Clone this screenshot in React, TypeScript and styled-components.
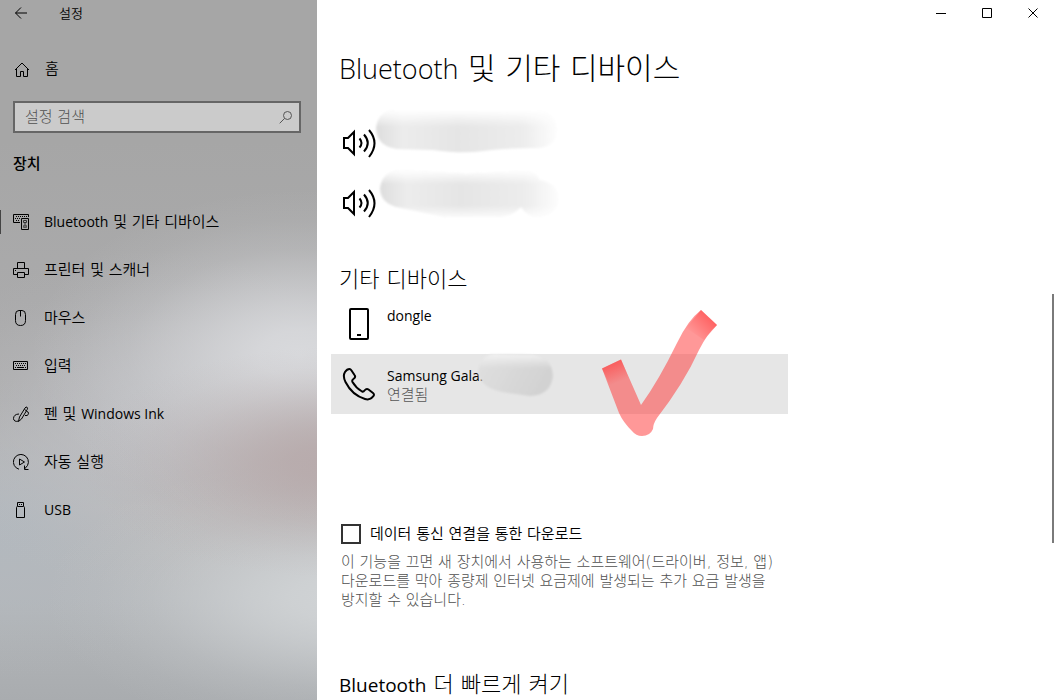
import React from "react";
import styled, { createGlobalStyle } from "styled-components";

const hangul = `"DejaVu Sans", "Noto Sans CJK KR", sans-serif`;
const latin = `"Open Sans", "Noto Sans CJK KR", sans-serif`;

// Soft elliptical light with a smooth falloff, for the blurred sidebar backdrop.
const glow = (size: string, at: string, rgb: string, strength = 1) => {
  const stops = [[1, 0], [0.93, 15], [0.75, 30], [0.5, 47], [0.25, 64], [0.08, 82], [0, 100]];
  return `radial-gradient(ellipse ${size} at ${at}, ${stops
    .map(([a, p]) => `rgba(${rgb}, ${(a * strength).toFixed(2)}) ${p}%`)
    .join(", ")})`;
};

const GlobalStyle = createGlobalStyle`
  * { box-sizing: border-box; }
  body {
    margin: 0;
    background: #fff;
    color: #000;
    font: 15px/19px ${hangul};
    overflow: hidden;
  }
  h1, h2, p, ul { margin: 0; padding: 0; }
  ul { list-style: none; }
  button { border: 0; padding: 0; background: none; font: inherit; color: inherit; }
`;

const Window = styled.div`
  display: grid;
  grid-template-columns: 317px 1fr;
  height: 100vh;
  overflow: hidden;
  font-weight: 300;
`;

const Sidebar = styled.aside`
  display: flex;
  flex-direction: column;
  background:
    ${glow("250px 115px", "330px 462px", "183, 169, 170", 0.9)},
    ${glow("270px 165px", "300px 355px", "217, 218, 221", 0.98)},
    ${glow("290px 140px", "335px 598px", "209, 212, 214", 0.95)},
    ${glow("240px 170px", "150px 420px", "192, 193, 197", 0.8)},
    ${glow("220px 150px", "0 530px", "178, 184, 190", 0.9)},
    linear-gradient(#a6a6a6 0, #a6a6a6 140px, #aaaaab 300px, #aeaeaf 400px, #bbbaba 510px, #b4b7ba 600px, #a9acaf 700px);
`;

const TitleBar = styled.header`
  display: flex;
  align-items: center;
  height: 26px;
  padding-left: 14px;
  gap: 31px;
  font-size: 13px;
  font-weight: 350;
`;

const IconButton = styled.button`
  display: flex;
`;

const HomeLink = styled.a`
  display: flex;
  align-items: center;
  gap: 14px;
  height: 32px;
  margin-top: 27px;
  padding-left: 14px;
  font-weight: 350;
  color: inherit;
  text-decoration: none;
`;

const SearchBox = styled.label`
  display: flex;
  align-items: center;
  height: 32px;
  margin: 16px 16px 0 13px;
  padding: 0 6px 0 10px;
  border: 2px solid #666;
  background: #cbcbcb;
`;

const SearchInput = styled.input`
  flex: 1;
  min-width: 0;
  border: 0;
  padding: 0;
  outline: 0;
  background: none;
  font: inherit;
  &::placeholder { color: #505050; opacity: 1; }
`;

const GroupTitle = styled.h2`
  font-size: 15px;
  font-weight: 500;
  margin: 22px 13px 24px;
`;

const NavList = styled.ul``;

const NavLink = styled.a<{ $active?: boolean }>`
  display: flex;
  align-items: center;
  gap: 14px;
  height: 48px;
  padding-left: 13px;
  font-weight: 350;
  color: inherit;
  text-decoration: none;
  background: ${(p) => (p.$active ? "linear-gradient(#444, #444) 0 50% / 1px 24px no-repeat" : "none")};
`;

const Latin = styled.span<{ $size?: number; $light?: boolean }>`
  font-family: ${latin};
  font-size: ${(p) => p.$size ?? 14}px;
  font-weight: ${(p) => (p.$light ? 300 : 400)};
`;

const Main = styled.main`
  position: relative;
  min-width: 0;
  overflow: hidden;
`;

const WindowControls = styled.div`
  display: flex;
  justify-content: flex-end;
  margin-right: -2px;
`;

const ControlButton = styled.button`
  display: grid;
  place-items: center;
  width: 46px;
  height: 26px;
`;

const Content = styled.div`
  max-width: 471px;
  padding-left: 14px;
`;

const PageTitle = styled.h1`
  font-size: 30px;
  font-weight: 300;
  line-height: 40px;
  padding-left: 8px;
  margin: 23px 0 24px;
`;

const SectionTitle = styled.h2`
  font-size: 22px;
  font-weight: 300;
  line-height: 28px;
  padding-left: 8px;
`;

const DeviceList = styled.ul``;

const OtherDevices = styled.section`
  margin: 33px 0 110px;
`;

const Device = styled.li<{ $selected?: boolean }>`
  position: relative;
  display: flex;
  gap: 11px;
  height: 60px;
  padding: 12px 11px;
  background: ${(p) => (p.$selected ? "#e6e6e6" : "none")};
`;

const DeviceIcon = styled.svg`
  width: 34px;
  height: 36px;
  flex: none;
`;

const DeviceText = styled.div`
  white-space: nowrap;
`;

const Status = styled.div`
  color: #555;
`;

const Overlay = styled.svg<{ $x: number; $y: number }>`
  position: absolute;
  left: ${(p) => p.$x}px;
  top: ${(p) => p.$y}px;
  pointer-events: none;
`;

const CheckLabel = styled.label`
  display: flex;
  align-items: center;
  gap: 9px;
  padding-left: 10px;
  font-weight: 350;
`;

const Checkbox = styled.input`
  appearance: none;
  width: 20px;
  height: 20px;
  margin: 0;
  border: 2px solid #333;
  background: #fff;
`;

const Description = styled.p`
  && { margin: 9px 0 61px; padding-left: 10px; }
  color: #505050;
  word-break: keep-all;
`;

const ScrollThumb = styled.div`
  position: absolute;
  right: 0;
  top: 42%;
  width: 2px;
  height: 249px;
  background: #7a7a7a;
`;

type GlyphProps = { children: React.ReactNode; w?: number; h?: number; top?: number };

const Glyph = ({ children, w = 17, h = 17, top = 0 }: GlyphProps) => (
  <svg width={w} height={h} viewBox={`0 ${top} ${w} ${h}`} fill="none" stroke="#000" aria-hidden="true">
    {children}
  </svg>
);

const icons = {
  devices: (
    <Glyph top={1}>
      <path d="M7 9.5H.5v-8h15V4" />
      <path d="M3 3.5h12M2 5.5h6M3 7.5h4" strokeDasharray="1 1" />
      <path d="M8.5 5.5h7v11h-7z" />
      <path d="M10.500 7.500h3v2h-3zM12 9v5" stroke="#333" />
      <path d="M10.500 12.500h3v2h-3z" stroke="#555" />
    </Glyph>
  ),
  printer: (
    <Glyph top={1}>
      <path d="M4.5 7V1.5h7V7M4.5 13.5h-4v-6h15v6h-4M4.5 11.5h7v5h-7zM2 9.5h1" />
    </Glyph>
  ),
  mouse: (
    <Glyph top={1}>
      <path d="M2.5 5.500q0-4 3.500-4h3q3.500 0 3.500 4v6q0 5-5 5t-5-5zM7.500 1.500v6" />
    </Glyph>
  ),
  keyboard: (
    <Glyph top={1}>
      <path d="M.5 4.5h14v8H.5z" />
      <path d="M2 6.5h11M3 8.5h10M2 10.5h1M12 10.5h1" strokeDasharray="1 1" />
      <path d="M4 10.5h7" />
    </Glyph>
  ),
  pen: (
    <Glyph top={1}>
      <path d="M5.500 16.500 6.500 12l5.500-9q1-1.500 2-.8t.2 2.300L8.500 14zM11.500 4.500l1.500 1" />
      <path d="M6 9C2.500 9 .5 11 .5 13.500S3 17 5.500 16M13.500 6.500q2 0 2 1.700T14 10.500H12" />
    </Glyph>
  ),
  autoplay: (
    <Glyph top={1}>
      <path d="M6 16.200A7.500 7.500 0 1 1 14.500 12.500L11.500 16M11.500 12.500v4H15.500M6.500 6v6l5-3z" />
    </Glyph>
  ),
  usb: (
    <Glyph top={1}>
      <path d="M4.500 5V1.500h6V5M3.500 6.500q0-1 1-1h6q1 0 1 1v10h-8zM6 3.500h1M8 3.500h1" />
    </Glyph>
  ),
};

const navItems = [
  { id: "bluetooth", icon: icons.devices, label: <><Latin>Bluetooth</Latin> 및 기타 디바이스</>, active: true },
  { id: "printers", icon: icons.printer, label: "프린터 및 스캐너" },
  { id: "mouse", icon: icons.mouse, label: "마우스" },
  { id: "typing", icon: icons.keyboard, label: "입력" },
  { id: "pen", icon: icons.pen, label: <>펜 및 <Latin>Windows Ink</Latin></> },
  { id: "autoplay", icon: icons.autoplay, label: "자동 실행" },
  { id: "usb", icon: icons.usb, label: <Latin>USB</Latin> },
];

const Speaker = () => (
  <DeviceIcon viewBox="0 0 34 36" fill="none" stroke="#000" strokeWidth="2" role="img" aria-label="오디오">
    <path d="M2 13h4l6-6v22l-6-6H2z" />
    <path d="M17.500 13.500q4 4.500 0 9M22 9.500q7.500 8.500 0 17M27 5q11 13 0 27" />
  </DeviceIcon>
);

const blobA = "M22 3H165Q184 6 184 23T164 41Q130 41 110 44T60 43L24 42Q4 39 3 22 4 5 22 3z";
const blobB =
  "M24 3 90 7 150 4Q160 5 164 13 182 16 183 33 180 49 160 50 151 49 145 40 136 50 118 50L70 50 20 40Q4 35 4 21 6 5 24 3z";
const blobC = "M18 3 58 4Q76 7 77 25 75 44 54 45L32 42Q3 38 2 20 5 4 18 3z";

export default function App() {
  return (
    <>
      <GlobalStyle />
      <Window>
        <Sidebar>
          <TitleBar>
            <IconButton aria-label="뒤로">
              <Glyph w={14} h={14}>
                <path d="M13 7H1.500M7 1.500 1.500 7 7 12.500" />
              </Glyph>
            </IconButton>
            <span>설정</span>
          </TitleBar>
          <HomeLink href="#home">
            <Glyph>
              <path d="M1 9 8 2l7 7M2.500 7.500v8h4v-5h3v5h4v-8" />
            </Glyph>
            홈
          </HomeLink>
          <SearchBox>
            <SearchInput type="text" placeholder="설정 검색" aria-label="설정 검색" />
            <svg width="14" height="14" viewBox="0 0 14 14" fill="none" stroke="#555" aria-hidden="true">
              <circle cx="8.500" cy="5.500" r="4" />
              <path d="M5.500 8.500.7 13.300" />
            </svg>
          </SearchBox>
          <GroupTitle>장치</GroupTitle>
          <nav>
            <NavList>
              {navItems.map((item) => (
                <li key={item.id}>
                  <NavLink href={`#${item.id}`} $active={item.active}>
                    {item.icon}
                    <span>{item.label}</span>
                  </NavLink>
                </li>
              ))}
            </NavList>
          </nav>
        </Sidebar>
        <Main>
          <WindowControls>
            <ControlButton aria-label="최소화">
              <Glyph w={11} h={11}><path d="M0 5.500h10" /></Glyph>
            </ControlButton>
            <ControlButton aria-label="최대화">
              <Glyph w={11} h={11}><path d="M.5.5h9v9h-9z" /></Glyph>
            </ControlButton>
            <ControlButton aria-label="닫기">
              <Glyph w={11} h={11}><path d="m.5.5 9 9M9.500.5l-9 9" /></Glyph>
            </ControlButton>
          </WindowControls>
          <Content>
            <PageTitle><Latin $size={27} $light>Bluetooth</Latin> 및 기타 디바이스</PageTitle>
            <DeviceList>
              <Device>
                <Speaker />
                <Overlay $x={42} $y={-6} width="188" height="50" viewBox="0 0 188 50">
                  <defs>
                    <linearGradient id="smear">
                      <stop offset="0" stopColor="#dedede" />
                      <stop offset=".15" stopColor="#ececec" />
                      <stop offset=".45" stopColor="#e5e5e5" />
                      <stop offset=".8" stopColor="#ececec" />
                      <stop offset="1" stopColor="#fdfdfd" />
                    </linearGradient>
                    <linearGradient id="fadeTop" x2="0" y2="1">
                      <stop offset="0" stopColor="#fff" />
                      <stop offset=".4" stopColor="#fff" stopOpacity="0" />
                    </linearGradient>
                    <filter id="soft"><feGaussianBlur stdDeviation="1" /></filter>
                  </defs>
                  <g filter="url(#soft)">
                    <path d={blobA} fill="url(#smear)" />
                    <path d={blobA} fill="url(#fadeTop)" />
                  </g>
                </Overlay>
              </Device>
              <Device>
                <Speaker />
                <Overlay $x={45} $y={-6} width="188" height="56" viewBox="0 0 188 56">
                  <defs>
                    <linearGradient id="fadeBoth" x2="0" y2="1">
                      <stop offset="0" stopColor="#fff" />
                      <stop offset=".3" stopColor="#fff" stopOpacity="0" />
                      <stop offset=".75" stopColor="#fff" stopOpacity="0" />
                      <stop offset="1" stopColor="#fff" stopOpacity=".8" />
                    </linearGradient>
                  </defs>
                  <g filter="url(#soft)">
                    <path d={blobB} fill="url(#smear)" />
                    <path d={blobB} fill="url(#fadeBoth)" />
                  </g>
                </Overlay>
              </Device>
            </DeviceList>
            <OtherDevices>
              <SectionTitle>기타 디바이스</SectionTitle>
              <DeviceList>
                <Device>
                  <DeviceIcon viewBox="0 0 34 36" fill="none" stroke="#000" strokeWidth="2" aria-hidden="true">
                    <rect x="8" y="3" width="18" height="30" rx="1" />
                    <path d="M15 29h4" />
                  </DeviceIcon>
                  <DeviceText><Latin>dongle</Latin></DeviceText>
                </Device>
                <Device $selected>
                  <DeviceIcon viewBox="0 0 34 36" fill="none" stroke="#000" strokeWidth="2" strokeLinejoin="round" aria-hidden="true">
                    <path d="M3 6Q5 3 7.500 3 8.500 3 9.500 4.500L12.500 9Q14 11 12 12.500 9.500 14 10.500 16 14 22 20 25.500 21.500 26 22.500 24.500 24.500 22 26.500 23.500L31 27Q33 28.500 31 30.500 28 34.500 23 33 10 29 3.500 16 .5 10 3 6z" />
                  </DeviceIcon>
                  <DeviceText>
                    <Latin>Samsung Gala.</Latin>
                    <Status>연결됨</Status>
                  </DeviceText>
                  <Overlay $x={145} $y={-3} width="80" height="48" viewBox="0 0 80 48">
                    <defs>
                      <linearGradient id="smearDark" x2="1" y2=".3">
                        <stop offset="0" stopColor="#e0e0e0" />
                        <stop offset=".5" stopColor="#d9d9d9" />
                        <stop offset="1" stopColor="#d2d2d2" />
                      </linearGradient>
                      <linearGradient id="smearTop" x2="0" y2="1">
                        <stop offset="0" stopColor="#f2f2f2" />
                        <stop offset=".35" stopColor="#ececec" stopOpacity="0" />
                      </linearGradient>
                    </defs>
                    <g filter="url(#soft)">
                      <path d={blobC} fill="url(#smearDark)" />
                      <path d={blobC} fill="url(#smearTop)" />
                    </g>
                  </Overlay>
                  <Overlay $x={269} $y={-46} width="120" height="132" viewBox="0 0 120 132">
                    <defs>
                      <linearGradient id="markStart" gradientUnits="userSpaceOnUse" x1="12" y1="56" x2="19" y2="74">
                        <stop offset="0" stopColor="#ff3232" stopOpacity=".5" />
                        <stop offset="1" stopColor="#ff3232" stopOpacity="0" />
                      </linearGradient>
                      <linearGradient id="markEnd" gradientUnits="userSpaceOnUse" x1="109" y1="10" x2="92" y2="27">
                        <stop offset="0" stopColor="#ff3232" stopOpacity=".5" />
                        <stop offset="1" stopColor="#ff3232" stopOpacity="0" />
                      </linearGradient>
                    </defs>
                    <path d="M2 60.500 21 51.500 41 97Q59 72 77 35 88 12 101 2L117 17Q107 26 99 42 84 75 57 110 53 116 53 121 50 128 42 128 36 128 32 123 23 114 19 105z" fill="#ff3232" fillOpacity=".5" />
                    <path d="M2 60.500 21 51.500 29 70 10 78z" fill="url(#markStart)" />
                    <path d="M101 2 117 17 104 32 86 20z" fill="url(#markEnd)" />
                  </Overlay>
                </Device>
              </DeviceList>
            </OtherDevices>
            <CheckLabel>
              <Checkbox type="checkbox" />
              데이터 통신 연결을 통한 다운로드
            </CheckLabel>
            <Description>
              이 기능을 끄면 새 장치에서 사용하는 소프트웨어(드라이버, 정보, 앱) 다운로드를 막아 종량제 인터넷 요금제에 발생되는 추가 요금 발생을 방지할 수 있습니다.
            </Description>
            <SectionTitle><Latin $size={19}>Bluetooth</Latin> 더 빠르게 켜기</SectionTitle>
          </Content>
          <ScrollThumb />
        </Main>
      </Window>
    </>
  );
}
